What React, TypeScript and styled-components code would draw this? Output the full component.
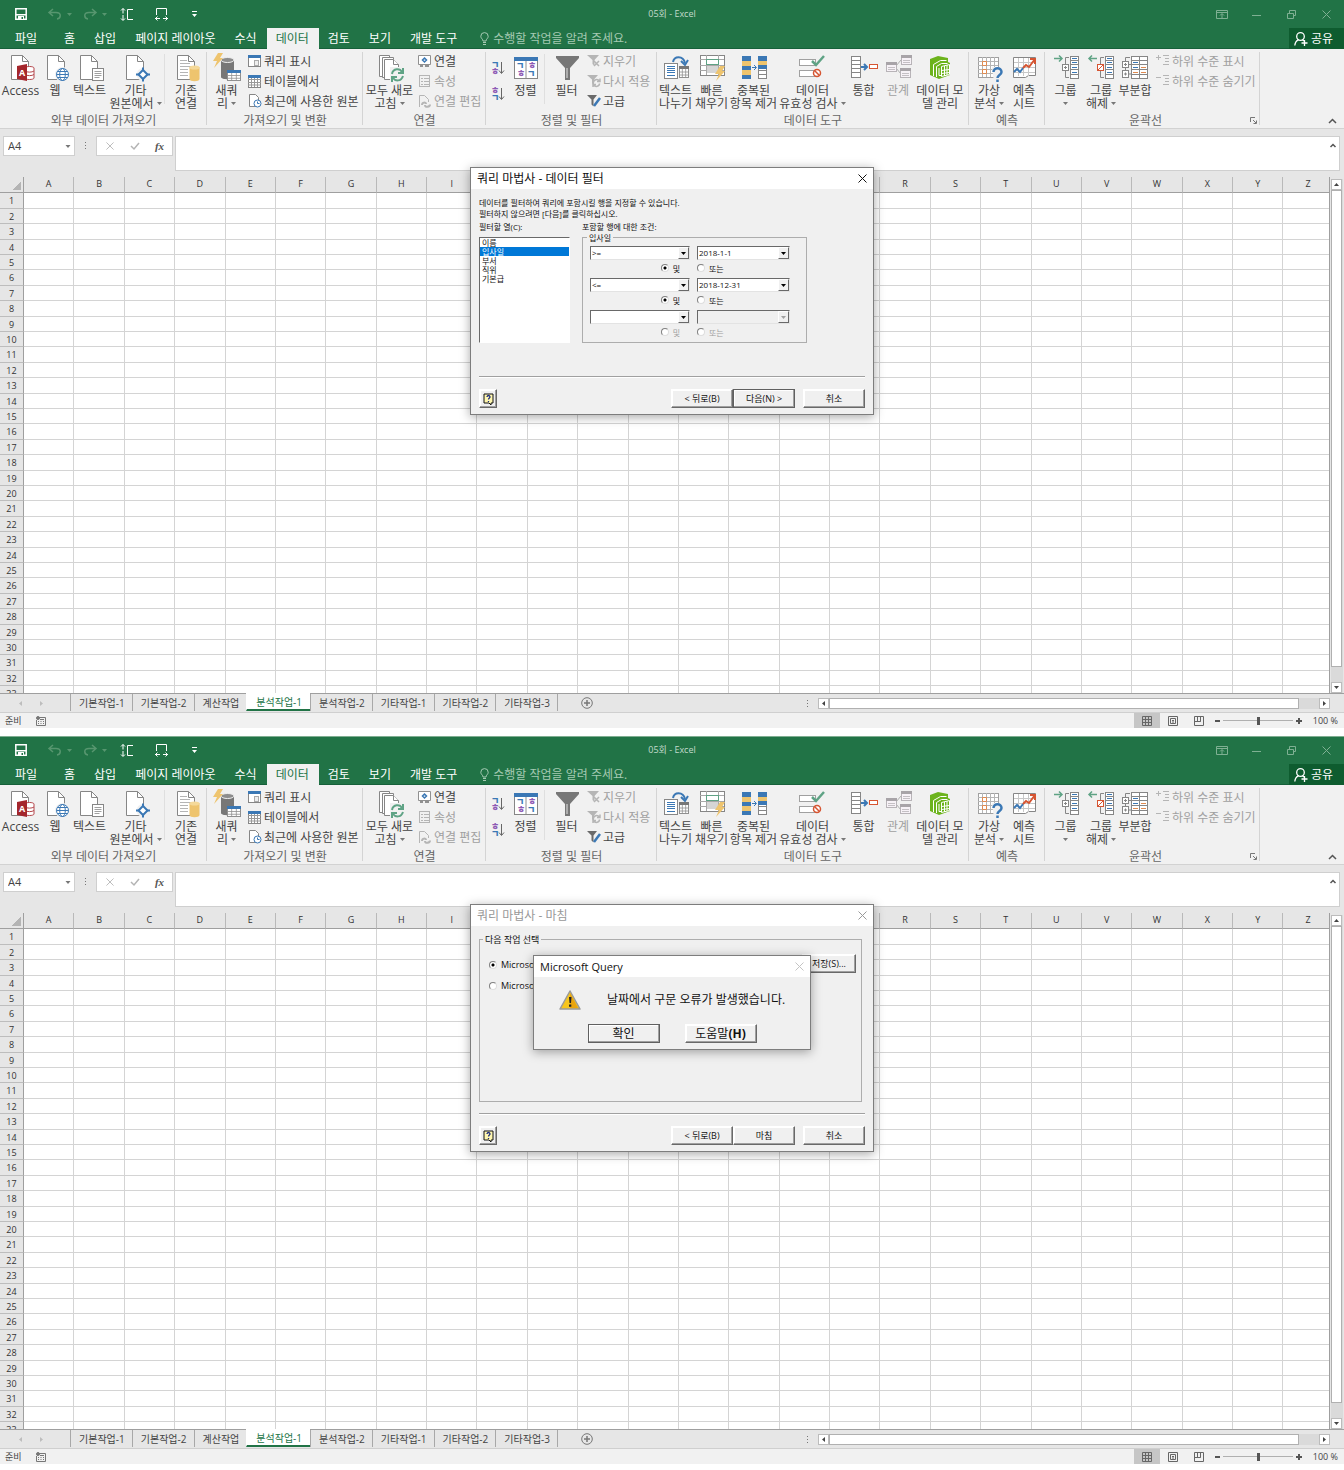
import React, { useId, useState } from "react";
import styled, { createGlobalStyle, css } from "styled-components";

const uiFont = `"Open Sans", "Noto Sans CJK KR", sans-serif`;

const c = {
  green: "#217346",
  greenDark: "#0e5c2f",
  ribbon: "#f1f1f1",
  chrome: "#e6e6e6",
  line: "#d4d4d4",
  edge: "#9f9f9f",
  text: "#444444",
  muted: "#a0a0a0",
  blue: "#3b78b5",
  purple: "#8e5bb5",
  mint: "#5fa385",
  gold: "#eec46e",
  orange: "#e08a4f",
  red: "#d65532",
  stroke: "#868686",
};

const GlobalStyle = createGlobalStyle`
  *, *::before, *::after { box-sizing: border-box; }
  body { margin: 0; background: #fff; font-family: ${uiFont}; color: ${c.text}; }
  button, input, select, textarea { font: inherit; color: inherit; margin: 0; padding: 0; border: 0; border-radius: 0; background: none; }
  svg { display: block; flex: none; overflow: visible; }
`;

const Page = styled.main`
  display: grid;
  grid-template-rows: repeat(2, minmax(0, 1fr));
  gap: 8px;
  height: 100vh;
  padding-bottom: 6px;
`;

const WindowFrame = styled.section`
  position: relative;
  display: flex;
  flex-direction: column;
  min-height: 0;
  background: ${c.chrome};
`;

/* ---------- title bar and tabs ---------- */

const TitleBar = styled.header<{ $edge?: boolean }>`
  display: grid;
  grid-template-columns: 1fr auto 1fr;
  align-items: center;
  height: 28px;
  flex: none;
  background: ${c.green};
  color: #c3dacb;
  font-size: 9px;
  line-height: 14px;
  ${(p) => p.$edge && css`box-shadow: inset 0 1px #7fae91;`}
`;

const QuickAccess = styled.div`
  display: flex;
  align-items: center;
  height: 24px;
  padding-left: 14px;
`;

const QuickButton = styled.button<{ $w: number; $dim?: boolean }>`
  display: flex;
  align-items: center;
  justify-content: flex-end;
  width: ${(p) => p.$w}px;
  height: 20px;
  color: ${(p) => (p.$dim ? "#57966f" : "#ffffff")};
`;

const WindowControls = styled.div`
  display: flex;
  justify-content: flex-end;
  height: 24px;
`;

const ControlButton = styled.button`
  display: flex;
  align-items: center;
  justify-content: center;
  width: 35px;
  color: #7fb093;
`;

const TabBar = styled.nav`
  display: flex;
  height: 21px;
  flex: none;
  background: ${c.green};
  box-shadow: inset 0 -1px #16603a;
  color: #ffffff;
  font-size: 12px;
  line-height: 20px;
`;

const FileTab = styled.button`
  width: 52px;
  margin-right: 2px;
`;

const Tab = styled.button<{ $active?: boolean }>`
  padding: 0 10px 0 9px;
  white-space: nowrap;
  &:nth-of-type(2) { padding-left: 10px; }
  ${(p) => p.$active && css`background: ${c.ribbon}; color: ${c.green};`}
`;

const TellMe = styled.label`
  display: flex;
  align-items: center;
  gap: 4px;
  margin-left: 13px;
  flex: 1;
  color: #a5cab3;
`;

const TellMeInput = styled.input`
  flex: 1;
  max-width: 200px;
  height: 20px;
  &::placeholder { color: #a5cab3; opacity: 1; }
`;

const ShareButton = styled.button`
  display: flex;
  align-items: center;
  justify-content: center;
  gap: 3px;
  width: 55px;
  padding-right: 6px;
  background: ${c.greenDark};
`;

/* ---------- ribbon ---------- */

const Ribbon = styled.div`
  display: flex;
  height: 80px;
  flex: none;
  background: ${c.ribbon};
  border-bottom: 1px solid #d2d2d2;
  font-size: 12px;
  line-height: 13px;
`;

const GroupBox = styled.section<{ $w: number }>`
  display: flex;
  flex-direction: column;
  flex: none;
  width: ${(p) => p.$w}px;
  background: linear-gradient(${c.line}, ${c.line}) right 3px / 1px 73px no-repeat;
`;

const GroupBody = styled.div`
  display: flex;
  height: 64px;
`;

const GroupFoot = styled.div`
  display: flex;
  align-items: center;
  height: 15px;
  color: #666666;
`;

const GroupName = styled.h2`
  flex: 1;
  margin: 0;
  font-size: 12px;
  font-weight: 400;
  line-height: 15px;
  text-align: center;
`;

const Launcher = styled.button`
  width: 14px;
  height: 14px;
  display: flex;
  align-items: center;
  justify-content: center;
`;

const BigButton = styled.button<{ $w: number }>`
  display: flex;
  flex-direction: column;
  align-items: center;
  width: ${(p) => p.$w}px;
  flex: none;
  padding-top: 5px;
  gap: 2px;
  white-space: nowrap;
  &:disabled { color: ${c.muted}; }
`;

const BigLabel = styled.span`
  display: flex;
  flex-direction: column;
  align-items: center;
`;

const LabelLine = styled.span`
  display: flex;
  align-items: center;
  gap: 3px;
  height: 13px;
`;

const SmallColumn = styled.div`
  display: flex;
  flex-direction: column;
  padding: 2px 0 0 2px;
`;

const SmallButton = styled.button`
  display: flex;
  align-items: center;
  gap: 2px;
  height: 20px;
  white-space: nowrap;
  &:disabled { color: ${c.muted}; }
`;

const SortColumn = styled.div`
  display: flex;
  flex-direction: column;
  width: 24px;
  padding: 8px 0 0 5px;
  gap: 4px;
`;

const SortButton = styled.button`
  height: 22px;
`;

const Divider = styled.span`
  width: 1px;
  height: 50px;
  margin: 5px 3px 0;
  flex: none;
  background: #dfdfdf;
`;

const RibbonTail = styled.div`
  display: flex;
  flex: 1;
  align-items: flex-end;
  justify-content: flex-end;
  padding: 0 7px 3px 0;
`;

/* ---------- formula bar ---------- */

const FormulaRow = styled.div`
  display: flex;
  align-items: flex-start;
  flex: none;
  height: 48px;
  padding: 7px 4px 0 3px;
  background: ${c.chrome};
  font-size: 11px;
  line-height: 18px;
`;

const NameBox = styled.div`
  display: flex;
  align-items: center;
  width: 72px;
  height: 20px;
  background: #fff;
  border: 1px solid #cfcfcf;
`;

const NameInput = styled.input`
  width: 61px;
  height: 18px;
  padding-left: 4px;
`;

const Grip = styled.span`
  display: flex;
  justify-content: center;
  align-items: center;
  width: 21px;
  height: 20px;
`;

const FormulaTools = styled.div`
  display: flex;
  width: 77px;
  height: 20px;
  margin-right: 2px;
  background: #fff;
  border: 1px solid #cfcfcf;
`;

const FormulaTool = styled.button`
  display: flex;
  flex: 1;
  align-items: center;
  justify-content: center;
  color: #555;
  &:disabled { color: #b4b4b4; }
`;

const FxLabel = styled.span`
  font-family: "Liberation Serif", serif;
  font-size: 11px;
  font-style: italic;
  font-weight: 700;
`;

const FormulaField = styled.div`
  display: flex;
  flex: 1;
  height: 35px;
  background: #fff;
  border: 1px solid #cfcfcf;
`;

const FormulaInput = styled.textarea`
  flex: 1;
  resize: none;
  outline: none;
`;

const ExpandButton = styled.button`
  width: 9px;
  height: 16px;
`;

/* ---------- sheet ---------- */

const SheetArea = styled.div`
  display: grid;
  grid-template-columns: minmax(0, 1fr) 14px;
  flex: 1 1 0;
  min-height: 0;
`;

const SheetView = styled.div`
  overflow: hidden;
  min-height: 0;
  border-right: 1px solid ${c.edge};
`;

const SheetTable = styled.table`
  table-layout: fixed;
  width: calc(100% + 5px);
  border-collapse: separate;
  border-spacing: 0;
  background: #fff;
  font-size: 9px;
  line-height: 13px;
  color: #333;
`;

const CornerCell = styled.th`
  width: 24px;
  padding: 0;
  background: linear-gradient(135deg, ${c.chrome} 0 50%, #b4b4b4 50%) 12px 4px / 9px 9px no-repeat ${c.chrome};
  border-right: 1px solid ${c.edge};
  border-bottom: 1px solid ${c.edge};
`;

const ColumnHead = styled.th`
  height: 16px;
  padding: 0;
  vertical-align: top;
  background: ${c.chrome};
  border-right: 1px solid #b9b9b9;
  border-bottom: 1px solid ${c.edge};
  font-weight: 400;
`;

const SheetRow = styled.tr`
  height: 15px;
  &:nth-child(5n + 1), &:nth-child(5n + 3) { height: 16px; }
`;

const RowHead = styled.th`
  padding: 0;
  background: ${c.chrome};
  border-right: 1px solid ${c.edge};
  border-bottom: 1px solid #bdbdbd;
  font-weight: 400;
`;

const Cell = styled.td`
  padding: 0;
  border-right: 1px solid ${c.line};
  border-bottom: 1px solid ${c.line};
`;

const ScrollColumn = styled.div`
  display: flex;
  flex-direction: column;
  width: 12px;
  margin: 2px 0 0 1px;
  background: #dadada;
`;

const ScrollButton = styled.button`
  display: flex;
  align-items: center;
  justify-content: center;
  width: 11px;
  height: 11px;
  flex: none;
  background: #fff;
  border: 1px solid #bcbcbc;
`;

const VThumb = styled.div`
  flex: 1;
  width: 11px;
  margin-bottom: 15px;
  background: #fff;
  border: 1px solid #b0b0b0;
`;

const SheetTabs = styled.div`
  display: flex;
  align-items: stretch;
  height: 19px;
  flex: none;
  border-top: 1px solid ${c.edge};
  font-size: 10px;
  line-height: 14px;
`;

const TabNav = styled.div`
  display: flex;
  align-items: center;
  gap: 14px;
  width: 70px;
  padding-left: 17px;
  color: #bdbdbd;
`;

const SheetTab = styled.button<{ $active?: boolean }>`
  height: 17px;
  padding: 0 7px 0 8px;
  white-space: nowrap;
  border-left: 1px solid #a8a8a8;
  ${(p) =>
    p.$active &&
    css`
      margin-top: -1px;
      height: 18px;
      padding: 2px 8px 0 9px;
      background: #fff;
      color: ${c.green};
      border-left-color: #fff;
      border-bottom: 2px solid ${c.green};
    `}
`;

const AddSheet = styled.button`
  display: flex;
  align-items: center;
  justify-content: center;
  width: 58px;
  height: 17px;
  border-left: 1px solid #a8a8a8;
`;

const TabSpacer = styled.span`
  flex: 1;
`;

const HScroll = styled.div`
  display: flex;
  width: 512px;
  height: 11px;
  margin: 4px 14px 0 0;
  background: #dadada;
`;

const HThumb = styled.div`
  flex: 1;
  margin-right: 20px;
  background: #fff;
  border: 1px solid #b0b0b0;
`;

const StatusBar = styled.footer`
  display: flex;
  align-items: center;
  height: 16px;
  flex: none;
  padding: 0 6px 0 5px;
  background: ${c.ribbon};
  border-top: 1px solid #cfcfcf;
  font-size: 9px;
  line-height: 14px;
`;

const StatusText = styled.span`
  flex: 1;
  display: flex;
  align-items: center;
  gap: 14px;
`;

const ViewButton = styled.button<{ $active?: boolean }>`
  display: flex;
  align-items: center;
  justify-content: center;
  width: 26px;
  height: 15px;
  background: ${(p) => (p.$active ? "#c6c6c6" : "transparent")};
`;

const ZoomStep = styled.button`
  display: flex;
  align-items: center;
  justify-content: center;
  width: 11px;
  height: 14px;
`;

const ZoomSlider = styled.input`
  appearance: none;
  width: 70px;
  height: 14px;
  background: linear-gradient(#b0b0b0, #b0b0b0) center / 100% 1px no-repeat;
  &::-webkit-slider-thumb { appearance: none; width: 3px; height: 8px; background: #555; }
`;

const ZoomValue = styled.span`
  width: 34px;
  text-align: right;
`;

/* ---------- dialogs ---------- */

const DialogLayer = styled.div<{ $top: number }>`
  position: absolute;
  inset: ${(p) => p.$top}px 0 auto 0;
  display: flex;
  justify-content: center;
  pointer-events: none;
`;

const DialogBox = styled.div<{ $w: number; $h: number }>`
  display: flex;
  flex-direction: column;
  width: ${(p) => p.$w}px;
  height: ${(p) => p.$h}px;
  background: #f0f0f0;
  border: 1px solid #7d7d7d;
  box-shadow: 0 2px 10px rgba(0, 0, 0, 0.35);
  color: #111;
  pointer-events: auto;
`;

const DialogTitle = styled.header<{ $inactive?: boolean }>`
  display: flex;
  align-items: center;
  height: 21px;
  flex: none;
  padding: 0 6px;
  background: #fff;
  color: ${(p) => (p.$inactive ? "#999999" : "#111111")};
  font-size: 12px;
  line-height: 18px;
`;

const DialogHeading = styled.h3`
  flex: 1;
  margin: 0;
  font-size: inherit;
  font-weight: 400;
`;

const QueryHeading = styled(DialogHeading)`
  font-size: 11px;
`;

const CloseButton = styled.button<{ $faint?: boolean }>`
  color: ${(p) => (p.$faint ? "#c4c4c4" : "inherit")};
`;

const DialogBody = styled.div`
  display: flex;
  flex-direction: column;
  flex: 1;
  padding: 8px 8px 0;
  font-size: 8px;
  line-height: 11px;
`;

const Intro = styled.p`
  margin: 0 0 2px;
`;

const FilterColumns = styled.div`
  display: grid;
  grid-template-columns: 91px 225px;
  column-gap: 12px;
  height: 117px;
`;

const FieldColumn = styled.div`
  display: flex;
  flex-direction: column;
`;

const FieldLabel = styled.span`
  height: 11px;
`;

const ListBox = styled.ul`
  flex: 1;
  margin: 5px 0 0;
  padding: 0;
  list-style: none;
  line-height: 9px;
  background: #fff;
  border: 1px solid;
  border-color: #696969 #fff #fff #696969;
`;

const ListItem = styled.li<{ $selected?: boolean }>`
  padding-left: 2px;
  ${(p) => p.$selected && css`background: #0078d7; color: #fff;`}
`;

const ClassicFieldset = styled.fieldset`
  flex: 1;
  min-width: 0;
  margin: 0;
  padding: 3px 7px 0;
  border: 1px solid #adadad;
`;

const ClassicLegend = styled.legend`
  padding: 0 2px;
  margin-left: -3px;
  line-height: 11px;
`;

const Condition = styled.div`
  display: grid;
  grid-template-columns: 100px 93px;
  column-gap: 7px;
  row-gap: 3px;
  height: 32px;
  grid-template-rows: 14px 10px;
`;

const Combo = styled.span`
  position: relative;
  display: block;
`;

const ComboSelect = styled.select`
  appearance: none;
  display: block;
  width: 100%;
  height: 14px;
  padding: 0 12px 0 1px;
  line-height: 12px;
  background: #fff;
  border: 1px solid;
  border-color: #696969 #e3e3e3 #e3e3e3 #696969;
  &:disabled { background: #f0f0f0; opacity: 1; color: #999; }
`;

const ComboArrow = styled.span`
  position: absolute;
  top: 1px;
  right: 1px;
  display: flex;
  align-items: center;
  justify-content: center;
  width: 11px;
  height: 12px;
  background: #f0f0f0;
  border: 1px solid;
  border-color: #fff #696969 #696969 #fff;
  pointer-events: none;
`;

const RadioLabel = styled.label<{ $end?: boolean; $disabled?: boolean }>`
  display: flex;
  align-items: center;
  gap: 4px;
  padding-right: ${(p) => (p.$end ? 10 : 0)}px;
  justify-content: ${(p) => (p.$end ? "flex-end" : "flex-start")};
  color: ${(p) => (p.$disabled ? "#a0a0a0" : "inherit")};
`;

const Radio = styled.input`
  appearance: none;
  width: 8px;
  height: 8px;
  border: 1px solid;
  border-color: #808080 #dedede #dedede #808080;
  border-radius: 50%;
  background: #fff;
  &:checked { background: radial-gradient(circle, #000 0 1px, #fff 2px); }
`;

const DialogFoot = styled.footer`
  display: flex;
  align-items: center;
  height: 38px;
  margin-top: auto;
  padding-top: 6px;
  border-top: 1px solid #a0a0a0;
  box-shadow: inset 0 1px #fff;
  font-size: 9px;
`;

const FootGap = styled.span`
  flex: 1;
`;

const ClassicButton = styled.button<{ $w: number; $default?: boolean; $gap?: boolean }>`
  display: flex;
  align-items: center;
  justify-content: center;
  width: ${(p) => p.$w}px;
  height: 19px;
  margin-left: ${(p) => (p.$gap ? 8 : 0)}px;
  white-space: pre;
  background: #f0f0f0;
  border: 1px solid;
  border-color: ${(p) => (p.$default ? "#606060" : "#fff #696969 #696969 #fff")};
  box-shadow: inset -1px -1px #a0a0a0, inset 1px 1px #fff;
`;

const FinishFieldset = styled(ClassicFieldset)`
  flex: none;
  height: 168px;
  margin: 0 3px 0 0;
  padding: 9px 5px 0 6px;
  font-size: 9px;
`;

const FinishOptions = styled.div`
  display: flex;
  justify-content: space-between;
  align-items: flex-start;
`;

const OptionList = styled.div`
  display: grid;
  grid-auto-rows: 21px;
  padding-left: 3px;
`;

const MessageBody = styled.div`
  display: flex;
  flex-direction: column;
  flex: 1;
  font-size: 12px;
  line-height: 18px;
`;

const MessageLine = styled.div`
  display: flex;
  align-items: center;
  gap: 26px;
  height: 47px;
  padding: 0 0 1px 25px;
`;

const MessageText = styled.p`
  margin: 0;
`;

const MessageButtons = styled.div`
  display: flex;
  justify-content: center;
  gap: 25px;
`;

/* ---------- icons ---------- */

const Big = ({ children }: { children: React.ReactNode }) => (
  <svg width="28" height="28" viewBox="0 0 28 28" fill="none" stroke={c.stroke} aria-hidden="true">{children}</svg>
);
const Small = ({ children, dim }: { children: React.ReactNode; dim?: boolean }) => (
  <svg width="14" height="14" viewBox="0 0 14 14" fill="none" stroke={dim ? "#b5b5b5" : c.stroke} aria-hidden="true">{children}</svg>
);
const Caret = ({ size = 5 }: { size?: number }) => (
  <svg width={size} height="3" viewBox="0 0 5 3" aria-hidden="true"><path d="M0 0h5L2.5 3z" fill="#777" /></svg>
);
const Sheet = ({ x = 4 }: { x?: number }) => (
  <g transform={`translate(${x} 1)`}><path d="M.5.5h11l6 6v18H.5z" fill="#fff" /><path d="M11.5.5v6h6" /></g>
);
const Bolt = ({ x, y }: { x: number; y: number }) => (
  <path transform={`translate(${x} ${y})`} d="M5 0h5L7 5h3L1 15l3-7H0z" fill={c.gold} stroke="none" />
);
const MiniTable = ({ x, y, w, h, head = c.blue, line = "#909090" }: { x: number; y: number; w: number; h: number; head?: string; line?: string }) => (
  <g>
    <rect x={x + 0.5} y={y + 0.5} width={w - 1} height={h - 1} fill="#fff" stroke={line} />
    <path d={`M${x + w / 3} ${y}v${h}M${x + (w * 2) / 3} ${y}v${h}M${x} ${y + h / 2}h${w}M${x} ${y + h * 0.75}h${w}`} stroke={line} strokeWidth=".8" />
    <rect x={x} y={y} width={w} height="3" fill={head} stroke="none" />
  </g>
);
const OutlineTable = () => (
  <g>
    <rect x="18.5" y="2.5" width="8" height="22" fill="#fff" />
    <path d="M18 6.500h9M18 10.500h9M18 15.500h9M18 20.500h9" />
    <path d="M20 4.500h5M20 8.500h5M20 13.500h5M20 18.500h5" stroke={c.blue} />
  </g>
);

const icons = {
  access: (
    <Big><Sheet x={4} />
      <path d="M19 12h9v15h-9z" fill={c.ribbon} stroke="none" />
      <path d="M18 14c0-2 9-2 9 0v10c0 2-9 2-9 0z" fill="#fff" stroke="#b5474c" /><path d="M18 17c2 1.500 7 1.500 9 0M18 20.500c2 1.500 7 1.500 9 0" stroke="#b5474c" />
      <path d="M10 12l10-2v17l-10-2z" fill="#a4262c" stroke="none" />
      <text x="15" y="22" textAnchor="middle" fontSize="9" fontWeight="700" fill="#fff" stroke="none">A</text>
    </Big>
  ),
  web: (
    <Big><Sheet x={6} /><circle cx="21.500" cy="20.500" r="7.500" fill={c.ribbon} stroke="none" /><g stroke={c.blue}><circle cx="21.500" cy="20.500" r="6" fill="#fff" /><ellipse cx="21.500" cy="20.500" rx="2.800" ry="6" /><path d="M15.500 20.500h12M16.500 17.500h10M16.500 23.500h10" /></g></Big>
  ),
  text: (
    <Big><Sheet x={4} /><rect x="16.500" y="14.500" width="11" height="12" fill="#fff" /><path d="M18.500 17.500h7M18.500 19.500h7M18.500 21.500h7M18.500 23.500h5" stroke="#a0a0a0" /></Big>
  ),
  other: (
    <Big><Sheet x={4} /><circle cx="21" cy="20.500" r="6.500" fill={c.ribbon} stroke="none" /><g stroke={c.blue} strokeWidth="2"><path d="M21 16l4.500 4.500L21 25l-4.500-4.500z" fill="#fff" /><path d="M21 13.500V17M21 24v3.500M14 20.500h3.500M24.500 20.500H28" /></g></Big>
  ),
  existing: (
    <Big><Sheet x={5} /><path d="M8 6.500h7M8 9.500h10M8 12.500h11M8 15.500h8M8 18.500h8M8 21.500h8" stroke="#b5b5b5" /><path d="M17.500 13v12c0 3 10 3 10 0V13z" fill={c.gold} stroke="none" /><ellipse cx="22.500" cy="13.500" rx="5" ry="2" fill="#f5d999" stroke="none" /></Big>
  ),
  newQuery: (
    <Big><path d="M8 6v17c0 3 13 3 13 0V6z" fill="#777" stroke="none" /><ellipse cx="14.500" cy="6" rx="6.500" ry="2.500" fill="#8d8d8d" stroke="#eee" /><Bolt x={0} y={-1} /><MiniTable x={14} y={16} w={14} h={11} /></Big>
  ),
  refreshAll: (
    <Big><g fill="#fff"><path d="M3.500 1.500h10v3h-6v18h-4z" /><path d="M6.500 3.500h11v3h-7v17h-4z" /><path d="M8.500 5.500h9l5 5v15h-14z" /><path d="M17.500 5.500v5h5" /></g><path d="M14 13h14v15H14z" fill={c.ribbon} stroke="none" /><g stroke={c.mint} strokeWidth="2"><path d="M16 20c1-6 8-6 10-2M27 22c-2 6-8 5-10 2" /><path d="M27 14v5h-5M16 28v-5h5" /></g></Big>
  ),
  sort: (
    <Big><rect x="2.500" y="3.500" width="23" height="21" fill="#fff" /><path d="M14 7v17" stroke="#909090" /><path d="M2 3h24v4H2z" fill={c.blue} stroke="none" />
      <g fontSize="9" fontWeight="900" stroke="none"><text x="4" y="15" fill={c.blue}>ㄱ</text><text x="5" y="23" fill={c.purple}>ㅎ</text><text x="16" y="15" fill={c.purple}>ㅎ</text><text x="15" y="23" fill={c.blue}>ㄱ</text></g>
    </Big>
  ),
  filter: (
    <Big><path d="M3 2h23v2l-9 10v12h-5V14L3 4z" fill="#777" stroke="none" /><path d="M14 14v10" stroke="#e4e4e4" /></Big>
  ),
  textSplit: (
    <Big><path d="M11 8c1-6 10-7 12 1" stroke={c.blue} strokeWidth="2" /><path d="M19 7l4 4 3-5" stroke={c.blue} strokeWidth="2" /><rect x="2.500" y="9.500" width="13" height="15" fill="#fff" /><path d="M5 12.500h8M5 14.500h8M5 16.500h8M5 18.500h8M5 21.500h8" stroke={c.blue} /><MiniTable x={17} y={12} w={10} h={12} head="#777" /></Big>
  ),
  flash: (
    <Big><rect x="2.500" y="1.500" width="24" height="20" fill="#fff" /><path d="M2 5.500h24M2 11.500h24M2 16.500h24M8.500 1v20M20.500 1v20" stroke="#a8a8a8" /><rect x="8.500" y="5.500" width="12" height="5" fill="#fff" stroke={c.mint} /><path d="M9 12h11v7H9z" fill="#d5d5d5" stroke="none" /><Bolt x={17} y={12} /></Big>
  ),
  duplicates: (
    <Big><g fill="#fff"><rect x="2.500" y="2.500" width="8" height="22" /><rect x="18.500" y="2.500" width="8" height="22" /></g><path d="M2 7.500h9M2 11.500h9M2 16.500h9M2 20.500h9M18 16.500h9M18 20.500h9" /><g stroke="none"><path d="M2 2h9v5H2zM2 12h9v4H2zM2 21h9v4H2zM18 2h9v5h-9z" fill={c.blue} /><path d="M2 7h9v5H2zM2 16h9v5H2z" fill={c.gold} /><path d="M18 7h9v4h-9z" fill={c.gold} /><path d="M18 11h9v4h-9z" fill={c.blue} /></g><path d="M12 13.500h4M14 11l2.500 2.500L14 16" stroke={c.blue} /></Big>
  ),
  validate: (
    <Big><g fill="#fff" stroke="#a0a0a0"><rect x=".5" y="5.500" width="16" height="6" /><rect x=".5" y="16.500" width="16" height="6" /></g><path d="M13 7l4 4 8-9" stroke={c.mint} strokeWidth="2.500" /><circle cx="18" cy="19" r="3.500" fill="#fff" stroke={c.red} strokeWidth="1.500" /><path d="M15.500 16.500l5 5" stroke={c.red} strokeWidth="1.500" /></Big>
  ),
  consolidate: (
    <Big><rect x="1.500" y="2.500" width="9" height="21" fill="#fff" /><path d="M1 6.500h10M1 10.500h10M1 14.500h10M1 18.500h10" /><path d="M11 13h6M14 10l3 3-3 3" stroke={c.blue} strokeWidth="2" /><rect x="19.500" y="10.500" width="8" height="4" fill="#fff" stroke={c.red} /></Big>
  ),
  relations: (
    <Big><path d="M12 12l5-6M12 14l5 6" stroke="#b0b0b0" />{[[2, 8], [17, 1], [16, 14]].map(([x, y]) => (<g key={x}><rect x={x + 0.5} y={y + 0.5} width="10" height="9" fill="#f7f2f7" stroke="#b8b4b8" /><path d={`M${x} ${y + 1.5}h11`} stroke="#a8a4a8" strokeWidth="3" /><path d={`M${x + 2} ${y + 5.5}h7M${x + 2} ${y + 7.5}h7`} stroke="#c4c0c4" /></g>))}</Big>
  ),
  model: (
    <Big><path d="M4 5l8-3 10 2v4l2 1v12l-11 4-9-4z" fill="#6cb31c" stroke="none" /><g stroke="#fff"><path d="M7.500 22V10.500l7-4h6M10.500 23V12.500l5-3h6M15 21.500h-2V14" /><path d="M15.500 12.500l8-2v10l-8 2z" fill="#6cb31c" /><path d="M18.500 12v10M21 11v10M15.500 16.500l8-1M15.500 19.500l8-1" /></g></Big>
  ),
  whatIf: (
    <Big><rect x="3.500" y="3.500" width="20" height="20" fill="#fff" stroke="#a0a0a0" /><path d="M7.500 3v20M11.500 3v20M15.500 3v20M19.500 3v20M3 7.500h20M3 11.500h20M3 15.500h20M3 19.500h20" stroke="#b5b5b5" /><path d="M7.500 7.500h4v4h-4zM7.500 15.500h4v4h-4z" stroke={c.orange} /><path d="M17 13h11v15h-9z" fill={c.ribbon} stroke="none" /><path d="M18.500 18c0-5 8-5 8 0 0 3-4 3-4 6M22.500 25.500V28" stroke={c.blue} strokeWidth="2.500" /></Big>
  ),
  forecast: (
    <Big><path d="M3.500 3.500h22v18h-7l-3 2h-12z" fill="#fff" /><path d="M8.500 4v18M13.500 4v18M18.500 4v18M4 8.500h21M4 13.500h21M4 18.500h21" stroke="#c8c8c8" /><path d="M4 18l3-3 3 3 3-4" stroke={c.blue} strokeWidth="2" /><path d="M13 14l3-3 3 2 6-8M20 5h5v5" stroke={c.red} strokeWidth="2" /></Big>
  ),
  group: (
    <Big><path d="M2 4.500h8M7 1.500l3 3-3 3" stroke={c.mint} strokeWidth="1.500" /><path d="M17 3.500h-3.500v20H17" /><rect x="10.500" y="10.500" width="6" height="6" fill="#fff" /><path d="M12 13.500h3M13.500 12v3" /><OutlineTable /></Big>
  ),
  ungroup: (
    <Big><path d="M10 4.500H2M5 1.500l-3 3 3 3" stroke={c.mint} strokeWidth="1.500" /><path d="M17 3.500h-3.500v20H17" /><rect x="10.500" y="10.500" width="6" height="6" fill="#fff" stroke={c.red} /><path d="M11 16l5-5" stroke={c.red} /><OutlineTable /></Big>
  ),
  subtotal: (
    <Big><path d="M9 3.500H4.500V22" /><g fill="#fff"><rect x="1.500" y="7.500" width="6" height="6" /><rect x="1.500" y="16.500" width="6" height="7" /></g><path d="M3 10.500h3M4.500 9v3M3 20h3M4.500 18.500v3M7.500 10.500H10M7.500 20H10" /><rect x="10.500" y="2.500" width="16" height="22" fill="#fff" /><path d="M10 6.500h17M10 10.500h17M10 15.500h17M10 20.500h17M18.500 2v22" /><path d="M12 8.500h5M12 13.500h5" stroke={c.blue} /><path d="M20 13.500h5M12 18.500h5M20 18.500h5" stroke={c.orange} /></Big>
  ),
};

const smallIcons = {
  showQuery: <Small><rect x=".5" y="1.500" width="12" height="11" fill="#fff" /><path d="M0 1h13v3H0z" fill={c.blue} stroke="none" /><rect x="6.500" y="6.500" width="4" height="5" fill="#eee" stroke="#aaa" /></Small>,
  fromTable: <Small><rect x=".5" y="1.500" width="12" height="12" fill="#fff" /><path d="M0 5.500h13M0 8.500h13M0 11h13M3.500 1v12M6.500 1v12M9.500 1v12" stroke="#999" /><path d="M0 1h13v3H0z" fill={c.blue} stroke="none" /></Small>,
  recent: <Small><path d="M1.500.5h6l3 3v9h-9z" fill="#fff" /><circle cx="9.500" cy="9.500" r="3.500" fill="#fff" stroke={c.blue} /><path d="M9.500 7.500v2h2" stroke={c.blue} /></Small>,
  connection: <Small><path d="M.5 1.500h12v9H.5z" fill="#fff" stroke="#909090" /><path d="M6.500 4l2 2-2 2-2-2z" stroke={c.blue} strokeWidth="1.500" /><path d="M2 12h3M7 12h4" stroke="#909090" strokeWidth="2" /></Small>,
  props: <Small dim><rect x="1.500" y="1.500" width="10" height="11" /><path d="M3 4.500h2M3 7.500h2M3 10.500h2M6 4.500h5M6 7.500h5M6 10.500h5" /></Small>,
  editLinks: <Small dim><path d="M1.500 13V1.500h5l4 4V8" /><path d="M4 11c0-3 4-3 4-1M7 11c0 3 5 2 5-.5" strokeWidth="2" /></Small>,
  clear: <Small dim><path d="M0 1h12L7.500 6v6l-2-2V6z" fill="#b5b5b5" stroke="none" /><path d="M7 7l5 5M12 7l-5 5" strokeWidth="1.500" /></Small>,
  reapply: <Small dim><path d="M0 1h11L7 5.500v6l-2-2v-4z" fill="#b5b5b5" stroke="none" /><path d="M12.500 7c-2-2.500-6-1.500-6 1.500M6.500 11c2 2.500 6 1.500 6-1.500M13 4.500v3h-3M6 13v-2.500h3" strokeWidth="1.500" /></Small>,
  advanced: <Small><path d="M0 1h10L6.500 5.500v7l-2-2v-5z" fill="#6a6a6a" stroke="none" /><path d="M13 4l-6 8" stroke={c.blue} strokeWidth="2.500" /></Small>,
  showDetail: <Small dim><path d="M0 3.500h5M2.500 1v5M7 1.500h6M9 4.500h4M9 7.500h4M7 10.500h6" /></Small>,
  hideDetail: <Small dim><path d="M0 3.500h5M7 1.500h6M9 4.500h4M9 7.500h4M7 10.500h6" /></Small>,
};

const SortIcon = ({ first, second, flip }: { first: string; second: string; flip?: boolean }) => (
  <svg width="14" height="16" viewBox="0 0 14 16" fill="none" aria-hidden="true">
    <g fontSize="9" fontWeight="900"><text x="0" y="8" fill={flip ? c.purple : c.blue}>{first}</text><text x="0" y="15" fill={flip ? c.blue : c.purple}>{second}</text></g>
    <path d="M10.500 2v11M8 10.500l2.500 3 2.500-3" stroke="#666" />
  </svg>
);

const CrossIcon = ({ size = 9 }: { size?: number }) => (
  <svg width={size} height={size} viewBox="0 0 9 9" fill="none" stroke="currentColor" aria-hidden="true"><path d="M.5.5l8 8M8.500.5l-8 8" /></svg>
);

const Arrow = ({ d }: { d: string }) => (
  <svg width="7" height="7" viewBox="0 0 7 7" aria-hidden="true"><path d={d} fill="currentColor" /></svg>
);

const HelpIcon = () => (
  <svg width="11" height="12" viewBox="0 0 11 12" aria-hidden="true"><path d="M1 1h9v9H8v2L6 10H1z" fill="#fff7b0" stroke="#111" /><path d="M4 4c0-2 3-2 3 0 0 1-1.500 1-1.500 2.500M5.500 8v1" fill="none" stroke="#1c2a80" strokeWidth="1.300" /></svg>
);

/* ---------- parts ---------- */

type BigProps = { icon: keyof typeof icons; lines: string[]; w: number; menu?: boolean; disabled?: boolean };
const Command = ({ icon, lines, w, menu, disabled }: BigProps) => (
  <BigButton type="button" $w={w} disabled={disabled}>
    {icons[icon]}
    <BigLabel>
      {lines.map((line, i) => (
        <LabelLine key={i}>{line}{menu && i === lines.length - 1 && <Caret />}</LabelLine>
      ))}
    </BigLabel>
  </BigButton>
);

const MiniCommand = ({ icon, label, disabled }: { icon: keyof typeof smallIcons; label: string; disabled?: boolean }) => (
  <SmallButton type="button" disabled={disabled}>{smallIcons[icon]}{label}</SmallButton>
);

const Group = ({ name, w, children, launcher }: { name: string; w: number; children: React.ReactNode; launcher?: boolean }) => (
  <GroupBox $w={w}>
    <GroupBody>{children}</GroupBody>
    <GroupFoot>
      <GroupName>{name}</GroupName>
      {launcher && (
        <Launcher type="button" aria-label="윤곽선 설정">
          <svg width="7" height="7" viewBox="0 0 7 7" fill="none" stroke="#777"><path d="M.5 5V.5H5M3 3l3 3M6.500 3.500v3h-3" /></svg>
        </Launcher>
      )}
    </GroupFoot>
  </GroupBox>
);

const RibbonPanel = () => (
  <Ribbon>
    <Group name="외부 데이터 가져오기" w={207}>
      <Command icon="access" lines={["Access"]} w={41} />
      <Command icon="web" lines={["웹"]} w={28} />
      <Command icon="text" lines={["텍스트"]} w={41} />
      <Command icon="other" lines={["기타", "원본에서"]} w={51} menu />
      <Divider />
      <Command icon="existing" lines={["기존", "연결"]} w={36} />
    </Group>
    <Group name="가져오기 및 변환" w={156}>
      <Command icon="newQuery" lines={["새쿼", "리"]} w={39} menu />
      <SmallColumn>
        <MiniCommand icon="showQuery" label="쿼리 표시" />
        <MiniCommand icon="fromTable" label="테이블에서" />
        <MiniCommand icon="recent" label="최근에 사용한 원본" />
      </SmallColumn>
    </Group>
    <Group name="연결" w={123}>
      <Command icon="refreshAll" lines={["모두 새로", "고침"]} w={53} menu />
      <SmallColumn>
        <MiniCommand icon="connection" label="연결" />
        <MiniCommand icon="props" label="속성" disabled />
        <MiniCommand icon="editLinks" label="연결 편집" disabled />
      </SmallColumn>
    </Group>
    <Group name="정렬 및 필터" w={171}>
      <SortColumn>
        <SortButton type="button" aria-label="오름차순 정렬"><SortIcon first="ㄱ" second="ㅎ" /></SortButton>
        <SortButton type="button" aria-label="내림차순 정렬"><SortIcon first="ㅎ" second="ㄱ" flip /></SortButton>
      </SortColumn>
      <Command icon="sort" lines={["정렬"]} w={31} />
      <Divider />
      <Command icon="filter" lines={["필터"]} w={37} />
      <SmallColumn>
        <MiniCommand icon="clear" label="지우기" disabled />
        <MiniCommand icon="reapply" label="다시 적용" disabled />
        <MiniCommand icon="advanced" label="고급" />
      </SmallColumn>
    </Group>
    <Group name="데이터 도구" w={312}>
      <Command icon="textSplit" lines={["텍스트", "나누기"]} w={37} />
      <Command icon="flash" lines={["빠른", "채우기"]} w={35} />
      <Command icon="duplicates" lines={["중복된", "항목 제거"]} w={49} />
      <Command icon="validate" lines={["데이터", "유효성 검사"]} w={69} menu />
      <Command icon="consolidate" lines={["통합"]} w={33} />
      <Command icon="relations" lines={["관계"]} w={36} disabled />
      <Command icon="model" lines={["데이터 모", "델 관리"]} w={48} />
    </Group>
    <Group name="예측" w={76}>
      <Command icon="whatIf" lines={["가상", "분석"]} w={40} menu />
      <Command icon="forecast" lines={["예측", "시트"]} w={30} />
    </Group>
    <Group name="윤곽선" w={215} launcher>
      <Command icon="group" lines={["그룹", ""]} w={41} menu />
      <Command icon="ungroup" lines={["그룹", "해제"]} w={30} menu />
      <Command icon="subtotal" lines={["부분합"]} w={38} />
      <SmallColumn>
        <MiniCommand icon="showDetail" label="하위 수준 표시" disabled />
        <MiniCommand icon="hideDetail" label="하위 수준 숨기기" disabled />
      </SmallColumn>
    </Group>
    <RibbonTail>
      <button type="button" aria-label="리본 메뉴 축소">
        <svg width="9" height="8" viewBox="0 0 9 8" fill="none" stroke="#555" strokeWidth="1.500"><path d="M1 6l3.500-3.500L8 6" /></svg>
      </button>
    </RibbonTail>
  </Ribbon>
);

const tabs = ["홈", "삽입", "페이지 레이아웃", "수식", "데이터", "검토", "보기", "개발 도구"];
const columns = "ABCDEFGHIJKLMNOPQRSTUVWXYZ".split("");
const rows = Array.from({ length: 33 }, (_, i) => i + 1);
const sheets = ["기본작업-1", "기본작업-2", "계산작업", "분석작업-1", "분석작업-2", "기타작업-1", "기타작업-2", "기타작업-3"];

const ExcelWindow = ({ children, edge }: { children: React.ReactNode; edge?: boolean }) => (
  <WindowFrame>
    <TitleBar $edge={edge}>
      <QuickAccess>
        <QuickButton $w={13} aria-label="저장"><svg width="12" height="12" viewBox="0 0 12 12" fill="none" stroke="currentColor"><path d="M.8.8h10.400v10.400H.8z" strokeWidth="1.500" /><path d="M1 6h10v1.500H1zM3 8h6v3H3z" fill="currentColor" stroke="none" /><path d="M6.500 9h1.500v2H6.500z" fill={c.green} stroke="none" /></svg></QuickButton>
        <QuickButton $w={45} $dim aria-label="실행 취소"><svg width="24" height="12" viewBox="0 0 24 12" fill="none" stroke="currentColor"><path d="M5 1L1 4.500 5 8M1 4.500h7c6 0 5 6 1 6.500" strokeWidth="1.500" /><path d="M19 5h5l-2.500 3z" fill="currentColor" stroke="none" /></svg></QuickButton>
        <QuickButton $w={35} $dim aria-label="다시 실행"><svg width="24" height="12" viewBox="0 0 24 12" fill="none" stroke="currentColor"><path d="M9 1l4 3.500L9 8M13 4.500H6C0 4.500 1 10.500 5 11" strokeWidth="1.500" /><path d="M19 5h5l-2.500 3z" fill="currentColor" stroke="none" /></svg></QuickButton>
        <QuickButton $w={26} aria-label="행 높이"><svg width="12" height="13" viewBox="0 0 12 13" fill="none" stroke="currentColor"><path d="M2 .5v5M0 2.500l2-2 2 2M2 7v5M0 10.500l2 2 2-2M12 1.500H6.500v10H12" /></svg></QuickButton>
        <QuickButton $w={35} aria-label="열 너비"><svg width="13" height="13" viewBox="0 0 13 13" fill="none" stroke="currentColor"><path d="M1.500 7V.5h10V7M0 10.500h5M2.500 8.500l-2 2 2 2M8 10.500h5M10.500 8.500l2 2-2 2" /></svg></QuickButton>
        <QuickButton $w={29} aria-label="빠른 실행 도구 모음 사용자 지정"><svg width="5" height="6" viewBox="0 0 5 6"><path d="M0 0h5v1H0zM0 3h5L2.500 6z" fill="currentColor" /></svg></QuickButton>
      </QuickAccess>
      <span>05회 - Excel</span>
      <WindowControls>
        <ControlButton aria-label="리본 메뉴 표시 옵션"><svg width="12" height="9" viewBox="0 0 12 9" fill="none" stroke="currentColor"><path d="M.5.5h11v8H.5zM.5 2.500h11M6 8V4M4 5.500l2-2 2 2" /></svg></ControlButton>
        <ControlButton aria-label="최소화"><svg width="9" height="9" viewBox="0 0 9 9"><path d="M0 5h9v1H0z" fill="currentColor" /></svg></ControlButton>
        <ControlButton aria-label="이전 크기로 복원"><svg width="9" height="9" viewBox="0 0 9 9" fill="none" stroke="currentColor"><path d="M.5 3.500h6v5h-6zM2.500 3V.5h6v5H7" /></svg></ControlButton>
        <ControlButton aria-label="닫기"><CrossIcon /></ControlButton>
      </WindowControls>
    </TitleBar>
    <TabBar>
      <FileTab type="button">파일</FileTab>
      {tabs.map((t) => <Tab key={t} type="button" $active={t === "데이터"}>{t}</Tab>)}
      <TellMe>
        <svg width="9" height="13" viewBox="0 0 9 13" fill="none" stroke="currentColor"><path d="M3 9C3 7 .8 6.500.8 4.300a3.700 3.700 0 017.400 0C8.200 6.500 6 7 6 9zM3 10.500h3M3 12.500h3" /></svg>
        <TellMeInput type="text" aria-label="수행할 작업" placeholder="수행할 작업을 알려 주세요." />
      </TellMe>
      <ShareButton type="button">
        <svg width="14" height="14" viewBox="0 0 14 14" fill="none" stroke="currentColor" strokeWidth="1.300"><circle cx="6.500" cy="4.500" r="3.800" /><path d="M.8 13.500c.3-3 1.700-5 3.700-5.700M8.500 8l1.500 1M10.500 8v6M7.500 11h6" /></svg>
        공유
      </ShareButton>
    </TabBar>
    <RibbonPanel />
    <FormulaRow>
      <NameBox>
        <NameInput aria-label="이름 상자" defaultValue="A4" />
        <button type="button" aria-label="이름 목록"><Caret size={6} /></button>
      </NameBox>
      <Grip><svg width="1" height="8" viewBox="0 0 1 8"><path d="M0 0h1v1H0zM0 3h1v1H0zM0 6h1v1H0z" fill="#777" /></svg></Grip>
      <FormulaTools>
        <FormulaTool type="button" disabled aria-label="취소"><CrossIcon size={8} /></FormulaTool>
        <FormulaTool type="button" disabled aria-label="입력"><svg width="10" height="8" viewBox="0 0 10 8" fill="none" stroke="currentColor" strokeWidth="1.500"><path d="M1 4l3 3 5-6" /></svg></FormulaTool>
        <FormulaTool type="button" aria-label="함수 삽입"><FxLabel>fx</FxLabel></FormulaTool>
      </FormulaTools>
      <FormulaField>
        <FormulaInput aria-label="수식 입력줄" />
        <ExpandButton type="button" aria-label="수식 입력줄 확장"><svg width="6" height="5" viewBox="0 0 6 5" fill="none" stroke="#555" strokeWidth="1.500"><path d="M.5 4L3 1.500 5.500 4" /></svg></ExpandButton>
      </FormulaField>
    </FormulaRow>
    <SheetArea>
      <SheetView>
        <SheetTable>
          <thead>
            <tr><CornerCell aria-label="모두 선택" />{columns.map((l) => <ColumnHead key={l} scope="col">{l}</ColumnHead>)}</tr>
          </thead>
          <tbody>
            {rows.map((n) => (
              <SheetRow key={n}><RowHead scope="row">{n}</RowHead>{columns.map((l) => <Cell key={l} />)}</SheetRow>
            ))}
          </tbody>
        </SheetTable>
      </SheetView>
      <ScrollColumn>
        <ScrollButton type="button" aria-label="위로"><Arrow d="M1 5h5L3.500 2z" /></ScrollButton>
        <VThumb />
        <ScrollButton type="button" aria-label="아래로"><Arrow d="M1 2h5L3.500 5z" /></ScrollButton>
      </ScrollColumn>
    </SheetArea>
    <SheetTabs>
      <TabNav><Arrow d="M5 1v5L2 3.500z" /><Arrow d="M2 1v5l3-2.500z" /></TabNav>
      {sheets.map((s) => <SheetTab key={s} type="button" $active={s === "분석작업-1"}>{s}</SheetTab>)}
      <AddSheet type="button" aria-label="새 시트"><svg width="12" height="12" viewBox="0 0 12 12" fill="none" stroke="#777"><circle cx="6" cy="6" r="5.300" /><path d="M3 6h6M6 3v6" strokeWidth="1.500" /></svg></AddSheet>
      <TabSpacer />
      <Grip><svg width="1" height="8" viewBox="0 0 1 8"><path d="M0 0h1v1H0zM0 3h1v1H0zM0 6h1v1H0z" fill="#777" /></svg></Grip>
      <HScroll>
        <ScrollButton type="button" aria-label="왼쪽"><Arrow d="M5 1v5L2 3.500z" /></ScrollButton>
        <HThumb />
        <ScrollButton type="button" aria-label="오른쪽"><Arrow d="M2 1v5l3-2.500z" /></ScrollButton>
      </HScroll>
    </SheetTabs>
    <StatusBar>
      <StatusText>준비<svg width="10" height="10" viewBox="0 0 10 10" fill="none" stroke="#777"><path d="M3 1.500h6.500v8h-9V4M2 5.500h1M4.500 5.500h1M7 5.500h1M2 7.500h1M4.500 7.500h1M7 7.500h1M4 3.500h4" /><circle cx="2" cy="2" r="1.500" fill="#777" /></svg></StatusText>
      <ViewButton type="button" $active aria-label="기본"><svg width="10" height="10" viewBox="0 0 10 10" fill="none" stroke="#666"><path d="M.5.5h9v9h-9zM3.500.5v9M6.500.5v9M.5 3.500h9M.5 6.500h9" /></svg></ViewButton>
      <ViewButton type="button" aria-label="페이지 레이아웃 보기"><svg width="10" height="10" viewBox="0 0 10 10" fill="none" stroke="#666"><path d="M.5.5h9v9h-9zM2.500 2.500h5v5h-5zM4 4.500h2M4 6h2" /></svg></ViewButton>
      <ViewButton type="button" aria-label="페이지 나누기 미리 보기"><svg width="10" height="10" viewBox="0 0 10 10" fill="none" stroke="#666"><path d="M.5.5h9v9h-9zM3.500.5v5h3v-5M.5 5.500h6" /></svg></ViewButton>
      <ZoomStep type="button" aria-label="축소"><svg width="5" height="2" viewBox="0 0 5 2"><path d="M0 0h5v2H0z" fill="#555" /></svg></ZoomStep>
      <ZoomSlider type="range" min="0" max="200" defaultValue="100" aria-label="확대/축소" />
      <ZoomStep type="button" aria-label="확대"><svg width="6" height="6" viewBox="0 0 6 6"><path d="M0 2h2V0h2v2h2v2H4v2H2V4H0z" fill="#555" /></svg></ZoomStep>
      <ZoomValue>100 %</ZoomValue>
    </StatusBar>
    {children}
  </WindowFrame>
);

const ComboBox = ({ value, label, disabled }: { value: string; label: string; disabled?: boolean }) => (
  <Combo>
    <ComboSelect aria-label={label} disabled={disabled} defaultValue={value}><option>{value}</option></ComboSelect>
    <ComboArrow><svg width="5" height="3" viewBox="0 0 5 3"><path d="M0 0h5L2.500 3z" fill={disabled ? "#a0a0a0" : "#000"} /></svg></ComboArrow>
  </Combo>
);

const ConditionRow = ({ op, value, chosen, last }: { op: string; value: string; chosen?: boolean; last?: boolean }) => {
  const name = useId();
  return (
    <Condition>
      <ComboBox value={op} label="연산자" />
      <ComboBox value={value} label="값" disabled={last} />
      <RadioLabel $end $disabled={last}><Radio type="radio" name={name} defaultChecked={chosen} disabled={last} />및</RadioLabel>
      <RadioLabel $disabled={last}><Radio type="radio" name={name} disabled={last} />또는</RadioLabel>
    </Condition>
  );
};

const WizardFoot = ({ next, isDefault }: { next: string; isDefault?: boolean }) => (
  <DialogFoot>
    <ClassicButton type="button" $w={18} aria-label="도움말"><HelpIcon /></ClassicButton>
    <FootGap />
    <ClassicButton type="button" $w={62}>&lt; 뒤로(B)</ClassicButton>
    <ClassicButton type="button" $w={62} $default={isDefault}>{next}</ClassicButton>
    <ClassicButton type="button" $w={62} $gap>취소</ClassicButton>
  </DialogFoot>
);

const FilterDialog = () => {
  const [field, setField] = useState("입사일");
  return (
    <DialogLayer $top={167}>
      <DialogBox role="dialog" aria-label="쿼리 마법사 - 데이터 필터" $w={404} $h={248}>
        <DialogTitle><DialogHeading>쿼리 마법사 - 데이터 필터</DialogHeading><CloseButton type="button" aria-label="닫기"><CrossIcon /></CloseButton></DialogTitle>
        <DialogBody>
          <Intro>데이터를 필터하여 쿼리에 포함시킬 행을 지정할 수 있습니다.<br />필터하지 않으려면 [다음]를 클릭하십시오.</Intro>
          <FilterColumns>
            <FieldColumn>
              <FieldLabel id="filter-fields">필터할 열(C):</FieldLabel>
              <ListBox role="listbox" aria-labelledby="filter-fields">
                {["이름", "입사일", "부서", "직위", "기본급"].map((f) => (
                  <ListItem key={f} role="option" aria-selected={f === field} $selected={f === field} onClick={() => setField(f)}>{f}</ListItem>
                ))}
              </ListBox>
            </FieldColumn>
            <FieldColumn>
              <FieldLabel>포함할 행에 대한 조건:</FieldLabel>
              <ClassicFieldset>
                <ClassicLegend>{field}</ClassicLegend>
                <ConditionRow op=">=" value="2018-1-1" chosen />
                <ConditionRow op="<=" value="2018-12-31" chosen />
                <ConditionRow op="" value="" last />
              </ClassicFieldset>
            </FieldColumn>
          </FilterColumns>
          <WizardFoot next="다음(N) >" isDefault />
        </DialogBody>
      </DialogBox>
    </DialogLayer>
  );
};

const FinishDialog = () => (
  <DialogLayer $top={168}>
    <DialogBox role="dialog" aria-label="쿼리 마법사 - 마침" $w={404} $h={248}>
      <DialogTitle $inactive><DialogHeading>쿼리 마법사 - 마침</DialogHeading><CloseButton type="button" aria-label="닫기"><CrossIcon /></CloseButton></DialogTitle>
      <DialogBody>
        <FinishFieldset>
          <ClassicLegend>다음 작업 선택</ClassicLegend>
          <FinishOptions>
            <OptionList>
              <RadioLabel><Radio type="radio" name="finish" defaultChecked />Microsoft</RadioLabel>
              <RadioLabel><Radio type="radio" name="finish" />Microsoft</RadioLabel>
            </OptionList>
            <ClassicButton type="button" $w={54}>저장(S)...</ClassicButton>
          </FinishOptions>
        </FinishFieldset>
        <WizardFoot next="마침" />
      </DialogBody>
    </DialogBox>
  </DialogLayer>
);

const ErrorDialog = () => (
  <DialogLayer $top={219}>
    <DialogBox role="alertdialog" aria-label="Microsoft Query" $w={278} $h={95}>
      <DialogTitle><QueryHeading>Microsoft Query</QueryHeading><CloseButton type="button" $faint aria-label="닫기"><CrossIcon /></CloseButton></DialogTitle>
      <MessageBody>
        <MessageLine>
          <svg width="22" height="20" viewBox="0 0 22 20" aria-hidden="true"><path d="M11 1l10 18H1z" fill="#f7c51d" stroke="#9a9a9a" strokeLinejoin="round" strokeWidth="1.500" /><path d="M11 3l8 15h-8z" fill="#eaa50f" /><path d="M10 7h2.500l-.5 6h-1.500zM10 14.500h2.300v2.300H10z" fill="#222" /></svg>
          <MessageText>날짜에서 구문 오류가 발생했습니다.</MessageText>
        </MessageLine>
        <MessageButtons>
          <ClassicButton type="button" $w={72} $default>확인</ClassicButton>
          <ClassicButton type="button" $w={72}>도움말<b>(H)</b></ClassicButton>
        </MessageButtons>
      </MessageBody>
    </DialogBox>
  </DialogLayer>
);

export default function App() {
  return (
    <>
      <GlobalStyle />
      <Page>
        <ExcelWindow><FilterDialog /></ExcelWindow>
        <ExcelWindow edge><FinishDialog /><ErrorDialog /></ExcelWindow>
      </Page>
    </>
  );
}
